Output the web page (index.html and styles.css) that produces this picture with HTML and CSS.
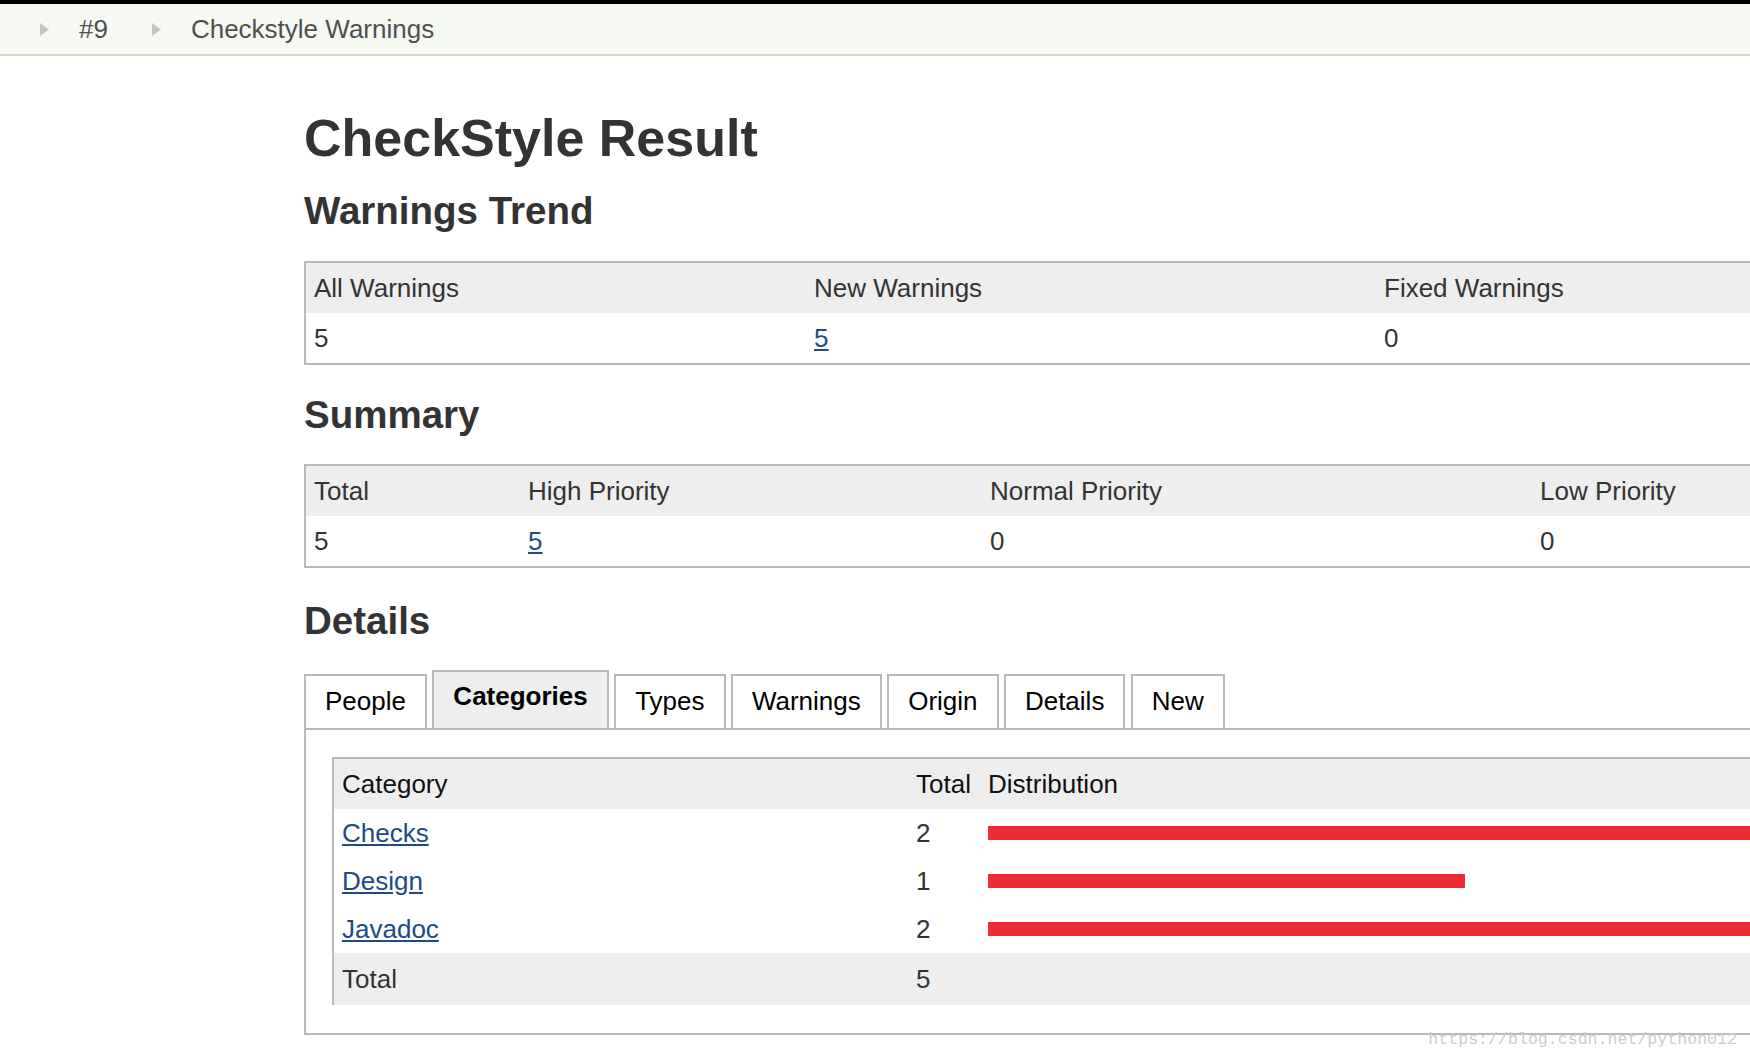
FILE: index.html
```html
<!DOCTYPE html>
<html>
<head>
<meta charset="utf-8">
<title>CheckStyle Result</title>
<link rel="stylesheet" href="styles.css">
</head>
<body>
<div class="topbar"></div>
<nav class="crumbs">
  <span class="arrow"><svg width="9" height="13" viewBox="0 0 9 13"><path d="M0 0 L9 6.5 L0 13 Z" fill="#c4c4c4"/></svg></span>
  <span class="crumb">#9</span>
  <span class="arrow"><svg width="9" height="13" viewBox="0 0 9 13"><path d="M0 0 L9 6.5 L0 13 Z" fill="#c4c4c4"/></svg></span>
  <span class="crumb">Checkstyle Warnings</span>
</nav>
<main class="main">
  <h1 class="title">CheckStyle Result</h1>
  <h2 class="section first">Warnings Trend</h2>
  <table class="pane trend">
    <colgroup><col class="t1"><col class="t2"><col></colgroup>
    <tr class="head"><td>All Warnings</td><td>New Warnings</td><td>Fixed Warnings</td></tr>
    <tr><td>5</td><td><a href="#">5</a></td><td>0</td></tr>
  </table>
  <h2 class="section">Summary</h2>
  <table class="pane summary">
    <colgroup><col class="s1"><col class="s2"><col class="s3"><col></colgroup>
    <tr class="head"><td>Total</td><td>High Priority</td><td>Normal Priority</td><td>Low Priority</td></tr>
    <tr><td>5</td><td><a href="#">5</a></td><td>0</td><td>0</td></tr>
  </table>
  <h2 class="section details-h">Details</h2>
  <div class="tabs">
    <div class="tab">People</div>
    <div class="tab active">Categories</div>
    <div class="tab">Types</div>
    <div class="tab">Warnings</div>
    <div class="tab">Origin</div>
    <div class="tab">Details</div>
    <div class="tab">New</div>
  </div>
  <div class="panel">
    <table class="cats">
      <colgroup><col class="c1"><col class="c2"><col></colgroup>
      <tr class="head"><th>Category</th><th>Total</th><th>Distribution</th></tr>
      <tr><td><a href="#">Checks</a></td><td>2</td><td><div class="bar" style="width:954px"></div></td></tr>
      <tr><td><a href="#">Design</a></td><td>1</td><td><div class="bar" style="width:477px"></div></td></tr>
      <tr><td><a href="#">Javadoc</a></td><td>2</td><td><div class="bar" style="width:954px"></div></td></tr>
      <tr class="foot"><td>Total</td><td>5</td><td></td></tr>
    </table>
  </div>
</main>
<div class="watermark">https://blog.csdn.net/python012</div>
</body>
</html>
```
FILE: styles.css
```css
html, body {
  margin: 0;
  padding: 0;
  width: 1750px;
  height: 1058px;
  overflow: hidden;
  background: #ffffff;
}
body {
  position: relative;
  font-family: "Liberation Sans", Arial, Helvetica, sans-serif;
  font-size: 26px;
  color: #333333;
}
.topbar {
  height: 4px;
  background: #000000;
}
.crumbs {
  height: 50px;
  background: #f6f8f2;
  border-bottom: 2px solid #d4d5cf;
  display: flex;
  align-items: center;
  padding-left: 40px;
}
.arrow {
  display: flex;
  align-items: center;
  margin-right: 30px;
  margin-top: 1px;
}
.crumb {
  color: #4f4f4f;
  font-size: 26px;
  line-height: 30px;
  margin-right: 44px;
}
.main {
  padding-left: 304px;
  width: 1600px;
}
.title {
  margin: 52px 0 0 0;
  font-size: 52px;
  line-height: 60px;
  font-weight: bold;
  color: #333333;
}
.section {
  margin: 27px 0 0 0;
  font-size: 38.5px;
  line-height: 46px;
  font-weight: bold;
  color: #333333;
}
.section.first { margin-top: 20px; }
.section.details-h { margin-top: 30px; }
.pane {
  margin-top: 27px;
  width: 1600px;
  border-collapse: collapse;
  table-layout: fixed;
  border: 2px solid #b9b9b9;
}
.summary { margin-top: 26px; }
.pane td {
  padding: 10px 8px;
  line-height: 30px;
  text-align: left;
  white-space: nowrap;
}
.pane .head td {
  background: #eeeeee;
}
.t1 { width: 501px; }
.t2 { width: 570px; }
.s1 { width: 215px; }
.s2 { width: 462px; }
.s3 { width: 550px; }
a {
  color: #204a87;
  text-decoration: underline;
}
.tabs {
  margin-top: 26px;
  height: 58px;
  display: flex;
  align-items: flex-end;
  gap: 5.4px;
}
.tab {
  border: 2px solid #b9b9b9;
  border-bottom: none;
  background: #ffffff;
  color: #000000;
  padding: 10px 19px 12px 19px;
  line-height: 30px;
  font-size: 26px;
}
.tab.active {
  background: #eeeeee;
  font-weight: bold;
  padding: 9px 19px 17px 19px;
}
.panel {
  border: 2px solid #b9b9b9;
  border-right: none;
  width: 1600px;
  padding: 27px 0 28px 26px;
}
.cats {
  width: 1560px;
  border-collapse: collapse;
  table-layout: fixed;
  border-top: 2px solid #b9b9b9;
  border-left: 2px solid #b9b9b9;
}
.c1 { width: 575px; }
.c2 { width: 72px; }
.cats th {
  background: #eeeeee;
  font-weight: normal;
  text-align: left;
  color: #111111;
  padding: 10px 8px;
  line-height: 30px;
}
.cats td {
  padding: 9px 8px;
  line-height: 30px;
  color: #333333;
  white-space: nowrap;
}
.cats .foot td {
  background: #eeeeee;
  padding: 11px 8px;
}
.bar {
  height: 14px;
  background: #ec2d34;
}
.watermark {
  position: absolute;
  right: 13px;
  top: 1030px;
  font-family: "Liberation Mono", "DejaVu Sans Mono", monospace;
  font-size: 16.6px;
  color: #cdcdcd;
}
```
